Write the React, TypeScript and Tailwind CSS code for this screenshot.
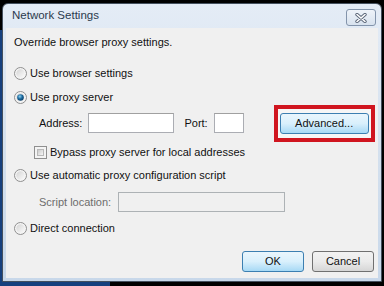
import type { ReactNode } from 'react'

function Radio({ checked }: { checked?: boolean }) {
  return (
    <svg width="13" height="13" viewBox="0 0 13 13" className="shrink-0">
      <defs>
        <linearGradient id={checked ? 'rg-on' : 'rg-off'} x1="0" y1="0" x2="1" y2="1">
          <stop offset="0" stopColor="#d4d4d4" />
          <stop offset="1" stopColor="#fbfbfb" />
        </linearGradient>
        <radialGradient id="dot" cx="0.4" cy="0.35" r="0.7">
          <stop offset="0" stopColor="#8fd3f0" />
          <stop offset="0.5" stopColor="#1c6ba0" />
          <stop offset="1" stopColor="#0b3b62" />
        </radialGradient>
      </defs>
      <circle cx="6.5" cy="6.5" r="6" fill="#f4f4f4" stroke="#8f8f8f" />
      <circle cx="6.5" cy="6.5" r="4.2" fill={`url(#${checked ? 'rg-on' : 'rg-off'})`} />
      {checked && <circle cx="6.5" cy="6.5" r="3.3" fill="url(#dot)" />}
    </svg>
  )
}

function Checkbox() {
  return (
    <div className="w-[13px] h-[13px] shrink-0 border border-[#8f8f8f] bg-[#f4f4f4] p-[2px]">
      <div className="w-full h-full bg-gradient-to-br from-[#cbcbcb] to-[#f7f7f7] border border-[#b9b9b9]" />
    </div>
  )
}

function Option({ checked, children }: { checked?: boolean; children: ReactNode }) {
  return (
    <div className="h-[16px] flex items-center pl-[8px]">
      <Radio checked={checked} />
      <span className="ml-[3px]">{children}</span>
    </div>
  )
}

function Field({ w }: { w: string }) {
  return <div className={`h-[20px] ${w} bg-white border border-[#abadb3] border-t-[#a0a0a0]`} />
}

function WinButton({ label, blue, w }: { label: string; blue?: boolean; w: string }) {
  return (
    <div
      className={`${w} h-[21px] rounded-[3px] border flex items-center justify-center ${
        blue
          ? 'border-[#3c7fb1] bg-gradient-to-b from-[#eaf6fd] via-[#d9f0fc] to-[#a7d9f5]'
          : 'border-[#707070] bg-gradient-to-b from-[#f2f2f2] via-[#ebebeb] to-[#d6d6d6]'
      }`}
    >
      <span className="leading-none">{label}</span>
    </div>
  )
}

export default function App() {
  return (
    <div className="relative w-[384px] h-[286px] bg-black overflow-hidden font-['Liberation_Sans',Arial,sans-serif] text-[11px] text-[#111]">
      {/* desktop behind the dialog */}
      <div className="absolute left-0 top-[30px] bottom-0 w-[110px] bg-[#16407e]" />

      <div className="relative ml-[2px] mt-[3px] w-[380px] h-[279px] rounded-t-[6px] border border-[#44505e] bg-gradient-to-b from-[#e4ecf6] via-[#d5e1ee] to-[#c8d8ea] flex flex-col px-[3px] pb-[3px]">
        <div className="h-[24px] flex items-center justify-between pl-[6px] pr-[2px]">
          <span className="text-[11.5px] text-[#2b3a4d]">Network Settings</span>
          <div className="w-[30px] h-[17px] mt-[3px] rounded-[3px] border border-[#8394ab] bg-gradient-to-b from-[#eef3f9] to-[#d8e2ee] flex items-center justify-center">
            <svg width="12" height="10" viewBox="0 0 12 10">
              <path d="M2 1.5 L10 8.5 M10 1.5 L2 8.5" stroke="#5a6678" strokeWidth="3.4" strokeLinecap="round" />
              <path d="M2 1.5 L10 8.5 M10 1.5 L2 8.5" stroke="#ffffff" strokeWidth="1.6" strokeLinecap="round" />
            </svg>
          </div>
        </div>

        <div className="flex-1 bg-[#f0f0f0] flex flex-col">
          <div className="h-[16px] mt-[6px] flex items-center pl-[8px]">Override browser proxy settings.</div>

          <div className="mt-[15px]">
            <Option>Use browser settings</Option>
          </div>
          <div className="mt-[8px]">
            <Option checked>Use proxy server</Option>
          </div>

          <div className="h-[20px] mt-[8px] flex items-center pl-[33px]">
            <span>Address:</span>
            <div className="ml-[6px]">
              <Field w="w-[86px]" />
            </div>
            <span className="ml-[10px]">Port:</span>
            <div className="ml-[6px]">
              <Field w="w-[30px]" />
            </div>
            <div className="ml-[30px] shrink-0 w-[101px] h-[37px] border-[4px] border-[#d0151f] bg-[#f6f6f6] flex items-center justify-center">
              <WinButton label="Advanced..." blue w="w-[89px]" />
            </div>
          </div>

          <div className="h-[16px] mt-[11px] flex items-center pl-[28px]">
            <Checkbox />
            <span className="ml-[3px]">Bypass proxy server for local addresses</span>
          </div>

          <div className="mt-[7px]">
            <Option>Use automatic proxy configuration script</Option>
          </div>

          <div className="h-[20px] mt-[9px] flex items-center pl-[33px]">
            <span className="text-[#6d6d6d]">Script location:</span>
            <div className="ml-auto mr-[93px] w-[167px] h-[20px] bg-[#f0f0f0] border border-[#adb2b5]" />
          </div>

          <div className="mt-[8px]">
            <Option>Direct connection</Option>
          </div>

          <div className="mt-[15px] flex justify-end gap-[8px] pr-[4px]">
            <WinButton label="OK" blue w="w-[62px]" />
            <WinButton label="Cancel" w="w-[62px]" />
          </div>
        </div>
      </div>
    </div>
  )
}
